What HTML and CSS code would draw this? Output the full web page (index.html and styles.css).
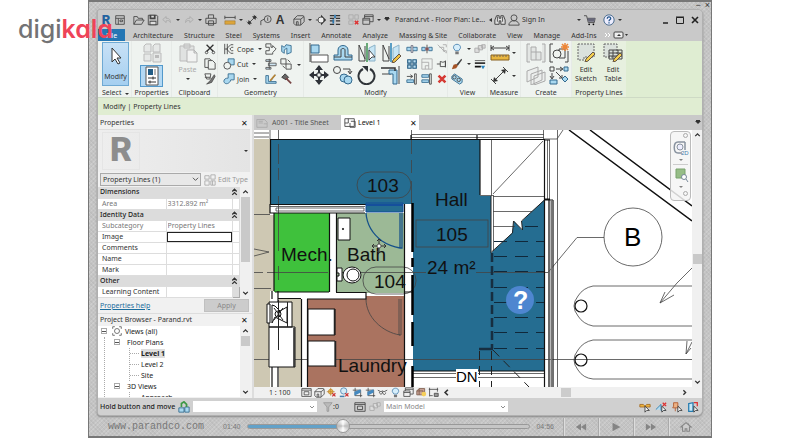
FILE: index.html
```html
<!DOCTYPE html>
<html lang="en">
<head>
<meta charset="utf-8">
<title>Parand.rvt - Floor Plan: Level 1</title>
<link rel="stylesheet" href="styles.css">
</head>
<body>
<svg class="sprite" aria-hidden="true">
  <defs>
    <symbol id="layout" viewBox="0 0 14 14"><path d="M2 2h10v10H2zM2 5h10M5 5v7M7 7h3v2H7z" class="k"/></symbol>
    <symbol id="open" viewBox="0 0 14 14"><path d="M1 12V3h4l1 2h5v2M1 12l3-5h9l-3 5z" class="k"/></symbol>
    <symbol id="save" viewBox="0 0 14 14"><path d="M1.500 1.500h10l1 1v10h-11z" class="k"/><path d="M3 1h7v5H3zM3 8h8v5H3z" fill="#444"/><path d="M5 2h3v2H5zM4 9h6v3H4z" fill="#ddd"/></symbol>
    <symbol id="undo" viewBox="0 0 14 14"><path d="M6 3L2 6.500 6 10V8c3-1 4 0 5 2 0-4-2-5-5-5z" class="g"/></symbol>
    <symbol id="redo" viewBox="0 0 14 14"><path d="M8 3l4 3.500L8 10V8c-3-1-4 0-5 2 0-4 2-5 5-5z" class="g"/></symbol>
    <symbol id="print" viewBox="0 0 14 14"><path d="M4 5V1h6v4M1 5h12v6H1zM4 8h6v5H4z" class="k"/></symbol>
    <symbol id="dim" viewBox="0 0 14 14"><path d="M1 4h12M1 2v4M13 2v4" class="k"/><path d="M1 8h12v4H1z" fill="#dda63b" stroke="#886020" stroke-width=".5"/></symbol>
    <symbol id="align" viewBox="0 0 14 14"><path d="M3 11l8-8M1 9l4 4M9 1l4 4" class="k"/><path d="M2 12l1-5 4 4zM12 2L7 3l4 4z" fill="#333"/></symbol>
    <symbol id="tag" viewBox="0 0 14 14"><circle cx="9" cy="6" r="4" class="k"/><path d="M9 4v4M1 13V8l4-2" class="k"/></symbol>
    <symbol id="cube" viewBox="0 0 14 14"><path d="M1 6l4-4h7l1 2v5l-4 4H3l-2-2zM1 6h8v7M9 6l4-3M4 13V9h2v4" class="k"/></symbol>
    <symbol id="section" viewBox="0 0 14 14"><path d="M7 1l6 6-6 6z" fill="#333"/><circle cx="7" cy="7" r="3.500" fill="#eee" stroke="#444"/><path d="M1 7h3" class="k"/></symbol>
    <symbol id="thin" viewBox="0 0 14 14"><path d="M1 2h5M1 5h5M1 8h5M1 12h5M8 2h5M8 5h5M8 8h5M8 12h5" stroke="#333" stroke-width="1.500"/><path d="M7 1v4M5 6v5" stroke="#2c77af" stroke-width="2"/></symbol>
    <symbol id="hidden" viewBox="0 0 14 14"><path d="M1 1h5v5H1zM8 1h4v5H8zM1 8h5v4H1z" class="g"/><path d="M8 8l4 4M12 8l-4 4" stroke="#d33" stroke-width="1.800"/></symbol>
    <symbol id="switch" viewBox="0 0 14 14"><path d="M3 5V1h10v8H9M1 5h8v7H1zM1 7h8M3 3h10" class="k"/></symbol>
    <symbol id="binoc" viewBox="0 0 14 14"><path d="M3 2h3v3h2V2h3l2 5v5H8V8H6v4H1V7z" fill="#ddd" stroke="#333"/><path d="M4 3v6M10 3v6" class="k"/></symbol>
    <symbol id="user" viewBox="0 0 14 14"><circle cx="7" cy="4.500" r="3.500" class="k"/><path d="M1 13c0-3 2-4 4-5h4c2 1 4 2 4 5z" class="k"/></symbol>
    <symbol id="cart" viewBox="0 0 14 14"><path d="M0 2h3l2 8h7l1-5H4" class="k"/><path d="M4 5h9l-1 4H5z" fill="#667"/><circle cx="6" cy="12" r="1"/><circle cx="11" cy="12" r="1"/></symbol>
    <symbol id="help" viewBox="0 0 14 14"><circle cx="7" cy="7" r="6" fill="#eef" stroke="#345b80"/><path d="M5 5.500c0-3 4-3 4 0 0 1-2 1-2 3M7 9.500v1.500" fill="none" stroke="#23578a" stroke-width="1.500"/></symbol>
    <symbol id="house" viewBox="0 0 14 14"><path d="M1 7l6-5 6 5H11v5H8V9H6v3H3V7zM10 3v2" fill="#ccc" stroke="#858585" stroke-width="1.200"/></symbol>

    <symbol id="arrow" viewBox="0 0 20 20"><path d="M6 2v14l3-3 3 5 2-1-3-5h4z" fill="#fff" stroke="#333"/></symbol>
    <symbol id="family" viewBox="0 0 20 20"><path d="M2 3l2-2h5v8H2zM11 3l2-2h5v8h-7zM2 11h7v7H2zM11 10h8v9h-8z" fill="#e6e8e7" stroke="#bbb"/><path d="M13 12h4v3h-4z" fill="#bbb"/></symbol>
    <symbol id="props" viewBox="0 0 20 20"><path d="M4 1h12v18H4z" fill="#fff" stroke="#555"/><path d="M6 3h5v6H6z" fill="#235d86"/><path d="M12 4h2M12 6h2M12 8h2" stroke="#777"/><path d="M6 12h8M6 16h8M11 10.500v3M8 14.500v3" stroke="#333"/></symbol>
    <symbol id="paste" viewBox="0 0 20 20"><path d="M2 3h14v15H2zM6 1h6v4H6z" fill="#e0e2e1" stroke="#bbb"/><path d="M9 7h7l3 3v9H9zM16 7v3h3" fill="#f2f3f2" stroke="#b5b5b5"/></symbol>
    <symbol id="scissor" viewBox="0 0 14 14"><path d="M3 2l8 8M11 2l-8 8" stroke="#333" stroke-width="1.500"/><circle cx="3" cy="11" r="1.500" class="k"/><circle cx="11" cy="11" r="1.500" class="k"/></symbol>
    <symbol id="copy" viewBox="0 0 14 14"><path d="M1 1h6l2 2v8H1z" class="k"/><path d="M5 3h5l3 3v7H5z" fill="#eff3f0" stroke="#444"/></symbol>
    <symbol id="brush" viewBox="0 0 14 14"><path d="M1 1h7l-1 6H3zM1 5h6" class="k"/><path d="M12 2L7 9l-4 4 6-2 4-7z" fill="#777" stroke="#333" stroke-width=".7"/></symbol>
    <symbol id="cope" viewBox="0 0 14 14"><path d="M2 1v12M5 1v12M2 7h3M12 2H9L5 6v2l4 4h3M12 5h-2L8 7l2 2h2" class="k"/></symbol>
    <symbol id="cut" viewBox="0 0 14 14"><path d="M6 1h7v7H6z" class="b"/><circle cx="5" cy="9" r="4" fill="#eff3f0" stroke="#444"/></symbol>
    <symbol id="join" viewBox="0 0 14 14"><path d="M6 1h7v7H9c-1 5-7 6-8 2 0-3 2-4 5-4z" class="b"/></symbol>
    <symbol id="geo1" viewBox="0 0 14 14"><path d="M1 1h6v4h2V3l4 4-4 4v2H1V9h4V5H1z" class="k"/></symbol>
    <symbol id="geo2" viewBox="0 0 14 14"><path d="M2 3l3 2 2-3 6 1v8l-5 2V6L5 8v4L2 10z" class="b"/></symbol>
    <symbol id="geo3" viewBox="0 0 14 14"><path d="M1 2h6v2H1zM4 6h9v3H4zM1 11h6v2H1zM5 1v12" class="b2"/></symbol>
    <symbol id="geo4" viewBox="0 0 14 14"><path d="M1 1h6v6H1zM7 7h6v6H7zM9 2l3 3M3 9l3 3" class="k"/></symbol>
    <symbol id="geo5" viewBox="0 0 14 14"><path d="M1 3v9h12v-2H4V3zM7 9l5-7" class="b"/><path d="M6 9l6-7" stroke="#b58436" stroke-width="2"/></symbol>
    <symbol id="hammer" viewBox="0 0 14 14"><path d="M2 5l4-4 4 4-3 3z" fill="#666" stroke="#333"/><path d="M7 6l6 6" stroke="#744" stroke-width="2"/></symbol>
    <symbol id="m1" viewBox="0 0 20 20"><path d="M2 2h8v8H2z" class="b"/><path d="M1 0v19M2 12h17v7H2z" fill="#fff" stroke="#555"/></symbol>
    <symbol id="m2" viewBox="0 0 20 20"><path d="M1 17h18v-5h-4V7c0-6-10-6-10 0v5H1z" class="b"/><path d="M1 14h7V7c0-2 4-2 4 0v7h7" class="k"/></symbol>
    <symbol id="m3" viewBox="0 0 20 20"><path d="M8 16L2 2v16h6V3" class="k"/><path d="M12 5l6-3v16h-6z" class="b3"/><path d="M10 0v19" stroke="#3b9150" stroke-width="1.500"/><path d="M12 7v10l3-3h3z" fill="#fff" stroke="#444"/></symbol>
    <symbol id="m4" viewBox="0 0 20 20"><path d="M8 16L2 2v16h6V3" class="k"/><path d="M12 5l6-3v11l-6 3z" class="b3"/><path d="M10 0v19" stroke="#2883b7" stroke-width="1.500"/><path d="M12 17l6-6 2 2-6 6-3 1z" fill="#f0c344" stroke="#654"/></symbol>
    <symbol id="move" viewBox="0 0 20 20"><path d="M10 0l4 5h-3v4h4V6l5 4-5 4v-3h-4v4h3l-4 5-4-5h3v-4H5v3l-5-4 5-4v3h4V5H6z" fill="#2e3238"/><path d="M8 8h4v4H8z" fill="#eff3f0" stroke="#2e3238"/></symbol>
    <symbol id="m5" viewBox="0 0 20 20"><circle cx="4" cy="5" r="3.500" class="k"/><path d="M10 4h7v4M15 6l2 3 2-3" class="k"/><circle cx="11" cy="13" r="4" class="b"/><circle cx="15" cy="15" r="4" class="b"/></symbol>
    <symbol id="rotate" viewBox="0 0 20 20"><path d="M13 4a8 8 0 1 1-7 0" fill="none" stroke="#30353a" stroke-width="2"/><path d="M5 1h6v6z" fill="#30353a"/></symbol>
    <symbol id="m6" viewBox="0 0 20 20"><path d="M14 19V8M18 19V1M1 9h9" class="k"/><path d="M8 5h8v14h-4V9H8z" class="b"/><path d="M0 3h14v3" fill="none" stroke="#333" stroke-width="1.500"/></symbol>
    <symbol id="s1" viewBox="0 0 14 14"><path d="M1 5h12v4H1z" class="b"/><path d="M6 3h2v8H6z" fill="#fff" stroke="#667"/></symbol>
    <symbol id="s2" viewBox="0 0 14 14"><path d="M1 5h4v4H1zM9 5h4v4H9z" class="b"/><circle cx="7" cy="7" r="2" fill="#b66"/><path d="M7 2v10" class="k"/></symbol>
    <symbol id="pin" viewBox="0 0 14 14"><path d="M1 7h4M5 4v6h6V4l-3 1zM11 3v8" class="k"/></symbol>
    <symbol id="unpin" viewBox="0 0 14 14"><path d="M2 2l9 9M4 5h5v5M8 2h4v3M8 9h4v3" class="g"/></symbol>
    <symbol id="array" viewBox="0 0 14 14"><path d="M2 2h4v4H2zM8 2h4v4H8zM2 8h4v4H2zM8 8h4v4H8z" fill="#bbdff2" stroke="#225b82" stroke-width="1.300"/></symbol>
    <symbol id="scale" viewBox="0 0 14 14"><path d="M1 1h12v12H1zM1 5h8v8M5 9h4M5 9v4" class="g"/></symbol>
    <symbol id="trim" viewBox="0 0 14 14"><path d="M1 8h8v3H1z" class="b"/><path d="M10 1h2v12h-2zM1 4h6M5 2l3 2-3 2" class="k"/></symbol>
    <symbol id="trim2" viewBox="0 0 14 14"><path d="M1 2h8v3H1zM1 8h8v3H1z" class="b"/><path d="M10 1h2v12h-2z" class="k"/></symbol>
    <symbol id="del" viewBox="0 0 14 14"><path d="M3 3l8 8M11 3l-8 8" stroke="#d53b35" stroke-width="3"/></symbol>
    <symbol id="bulb" viewBox="0 0 14 14"><path d="M5 9L3 6c-1-6 9-6 8 0L9 9z" fill="#d6eefb" stroke="#4680ae"/><path d="M5 10h4v3H5z" fill="#777"/></symbol>
    <symbol id="paint" viewBox="0 0 14 14"><path d="M6 8L12 1l1 1-5 7z" fill="#444"/><path d="M1 13l2-5 3-1 2 2-2 3z" fill="#a55325"/></symbol>
    <symbol id="boxes" viewBox="0 0 14 14"><path d="M1 6h5v5H1zM5 3h5v5H5zM9 2h4v4H9z" fill="#ddd" stroke="#aaa"/></symbol>
    <symbol id="lines" viewBox="0 0 14 14"><path d="M1 3h12" stroke="#555"/><path d="M1 6h12" stroke="#333" stroke-width="2"/><path d="M1 10h7" stroke="#111" stroke-width="2"/><path d="M8 9h5l-2.500 4z" fill="#2a82bc"/></symbol>
    <symbol id="pipe" viewBox="0 0 14 14"><path d="M1 4l3-3 9 6v4l-3 2-9-6z" class="b"/><circle cx="4" cy="5" r="2" class="k"/><circle cx="9" cy="8" r="2" class="k"/></symbol>
    <symbol id="ruler" viewBox="0 0 20 20"><path d="M1 5h18M1 2v6M19 2v6M4 3L1 5l3 2M16 3l3 2-3 2" class="k"/><path d="M1 12h18v5H1z" fill="#e8b63f" stroke="#87611f"/><path d="M4 12v2M7 12v2M10 12v2M13 12v2M16 12v2" stroke="#765"/></symbol>
    <symbol id="measure" viewBox="0 0 20 20"><path d="M3 16L16 3M1 13l5 5M13 1l5 5" class="k"/><path d="M3 16l1-5 4 4zM16 3l-5 1 4 4z" fill="#333"/></symbol>
    <symbol id="asm" viewBox="0 0 20 20"><path d="M4 1H1v18h3M16 1h3v18h-3M5 4h5v5h5v8H5zM5 9h5v8" fill="#e3e6e4" stroke="#aaa"/></symbol>
    <symbol id="newfam" viewBox="0 0 20 20"><path d="M4 1H1v18h3M16 19h3V8M10 6h6v9h-6z" class="k"/><circle cx="8" cy="11" r="4" fill="#eff3f0" stroke="#444"/><path d="M16 0v8M12 4h8M13 1l6 6M19 1l-6 6" stroke="#ec8638" stroke-width="1.500"/></symbol>
    <symbol id="group" viewBox="0 0 20 20"><path d="M1 6l11-4v10L1 17zM5 9l11-4v10L5 20zM8 11l11-4v9L8 20z" fill="#eceeed" stroke="#aaa"/></symbol>
    <symbol id="create" viewBox="0 0 20 20"><path d="M1 2h4v4H1zM7 4h6M11 2l3 2-3 2M3 8v5M1 11l2 3 2-3M7 7l6 6M10 13h3v-3" class="k"/><path d="M15 2h4v4h-4zM1 15h7v4H1zM16 11l3 3-3 3-3-3z" class="b"/></symbol>
    <symbol id="sketch" viewBox="0 0 20 20"><path d="M2 2h16v13H8v3H2z" fill="#dbe2dc" stroke="#666" stroke-dasharray="2 1"/><path d="M10 17l7-7 2 2-7 7-3 1z" fill="#f3cf4e" stroke="#654"/></symbol>
    <symbol id="table" viewBox="0 0 20 20"><path d="M1 2h13v13H1z" fill="#dbe2dc" stroke="#666" stroke-dasharray="2 1"/><path d="M6 8h13v9H6zM6 11h13M6 14h13M10 8v9M15 8v9" class="k"/><path d="M11 17l6-6 2 2-6 6-3 1z" fill="#f3cf4e" stroke="#654"/></symbol>
    <symbol id="detail" viewBox="0 0 14 14"><path d="M1 2h12v10H1zM1 4h12M4 6h6v4H4z" class="k"/></symbol>
    <symbol id="sun" viewBox="0 0 14 14"><circle cx="6" cy="6" r="3" fill="#f7c854" stroke="#bd8430"/><path d="M6 1v10M1 6h10" stroke="#bd8430"/><path d="M8 8l4 4M12 8l-4 4" stroke="#c33" stroke-width="1.500"/></symbol>
    <symbol id="shadow" viewBox="0 0 14 14"><circle cx="6" cy="5" r="4" fill="#d4eaf6" stroke="#4680ae"/><path d="M1 12h6" stroke="#4680ae" stroke-width="2"/><path d="M8 8l4 4M12 8l-4 4" stroke="#c33" stroke-width="1.500"/></symbol>
    <symbol id="crop" viewBox="0 0 14 14"><path d="M4 1v10h9M1 4h10v9" class="k"/><path d="M3 6l8-3v4L3 11z" fill="#4489c0"/></symbol>
    <symbol id="specs" viewBox="0 0 14 14"><path d="M1 4l4 2 2-1 2 1 4-2M3 6c0 4 4 4 4 0 0 4 4 5 4 1" class="k"/></symbol>
    <symbol id="filter" viewBox="0 0 14 14"><path d="M3 2h10L9 7v5H7V7z" fill="#bbb" stroke="#999"/></symbol>
    <symbol id="work" viewBox="0 0 14 14"><path d="M1 8h6v5H1zM8 7h5v6H8z" class="b"/><path d="M4 7V3l3-2 3 3v3" fill="none" stroke="#3c9845" stroke-width="2"/></symbol>
    <symbol id="sel" viewBox="0 0 14 14"><path d="M1 4h4l2 2 2-2h4v3H1z" fill="#edb53d" stroke="#a46b24"/><path d="M7 6v7l2-2h3z" fill="#fff" stroke="#333"/></symbol>
    <symbol id="sel2" viewBox="0 0 14 14"><path d="M1 10l6-6v7h5" fill="#b6dbee" stroke="#277caf"/><path d="M9 2l4 4M13 2L9 6" stroke="#d33" stroke-width="1.500"/><path d="M8 6v7l2-2h3z" fill="#fff" stroke="#333"/></symbol>
    <symbol id="sel3" viewBox="0 0 14 14"><path d="M3 2h5v4l2 2H2l1-2zM5 8v4" fill="#edb183" stroke="#b15a2c"/><path d="M8 6v7l2-2h3z" fill="#fff" stroke="#333"/></symbol>
    <symbol id="sel4" viewBox="0 0 14 14"><path d="M2 3l5-1v10H2z" fill="#c8e8f7" stroke="#277caf" stroke-width="1.500"/><path d="M8 2h4v4" fill="none" stroke="#d33" stroke-width="1.500"/><path d="M8 6v7l2-2h3z" fill="#fff" stroke="#333"/></symbol>
    <symbol id="reveal" viewBox="0 0 14 14"><path d="M1 5l3-3h7v8H1zM4 2v8M1 5h8v5" fill="#c9a397" stroke="#754"/><circle cx="10" cy="9" r="3" fill="#f6cf5a"/></symbol>
    <symbol id="constraint" viewBox="0 0 14 14"><path d="M1 3h12M2 1v11M12 1v5M2 11h4" class="k"/><path d="M8 8h5v4H8z" fill="#999" stroke="#444"/></symbol>
    <symbol id="sheet" viewBox="0 0 14 14"><path d="M1 3h9l3 3v6H1zM3 5h5M3 7h5M9 8h4" class="g"/></symbol>
    <symbol id="plan" viewBox="0 0 14 14"><path d="M1 2h11v9H1zM1 7h4V2M8 5h5v7H7V7" class="k"/></symbol>
    <symbol id="edittype" viewBox="0 0 14 14"><path d="M1 2h5v4H1zM8 1h5v5H8zM1 8h5v5H1zM8 8h5v5H8zM10 8v5" class="g"/></symbol>
    <symbol id="viewicon" viewBox="0 0 14 14"><path d="M1 4V1h3M10 1h3v3M1 10v3h3M10 13h3v-3" class="k"/><circle cx="7" cy="7" r="3.500" class="k"/></symbol>
    <symbol id="fold" viewBox="0 0 8 8"><path d="M2 4l2-2 2 2M2 7l2-2 2 2" class="k2"/></symbol>
  </defs>
</svg>

<div class="logo"><span>digi</span><b>kala</b></div>

<div class="player">
  <div class="frame-top"><button aria-label="Minimize player">−</button><button aria-label="Close player">×</button></div>

  <div class="app">
    <header class="titlebar">
      <div class="quick">
        <button class="r">R</button><button><svg><use href="#layout"/></svg></button><i class="sep"></i>
        <button><svg><use href="#open"/></svg></button><button><svg><use href="#save"/></svg></button><button><svg><use href="#undo"/></svg></button><button class="caret"></button><button><svg><use href="#redo"/></svg></button><button class="caret"></button><button><svg><use href="#print"/></svg></button><i class="sep"></i>
        <button><svg><use href="#dim"/></svg></button><button class="caret"></button><button><svg><use href="#align"/></svg></button><button><svg><use href="#tag"/></svg></button><button class="letter">A</button><i class="sep"></i>
        <button><svg><use href="#cube"/></svg></button><button class="caret"></button><button><svg><use href="#section"/></svg></button><button><svg><use href="#thin"/></svg></button><i class="sep"></i>
        <button><svg><use href="#hidden"/></svg></button><button><svg><use href="#switch"/></svg></button><button class="caret"></button><button class="caret more"></button>
      </div>
      <span class="title">Parand.rvt - Floor Plan: Le...</span>
      <div class="account"><button class="back"></button><button><svg><use href="#binoc"/></svg></button><button class="signin"><svg><use href="#user"/></svg>Sign In</button></div>
      <div class="account"><button class="caret"></button><button><svg><use href="#cart"/></svg></button><i class="sep"></i><button><svg><use href="#help"/></svg></button><button class="caret"></button></div>
      <div class="winctl"><button aria-label="Minimize"><svg viewBox="0 0 10 10"><path d="M3 8h5" stroke="#222" stroke-width="1.500"/></svg></button><button aria-label="Maximize"><svg viewBox="0 0 10 10"><path d="M1.500 2.500h7v6h-7zM1 2h8" fill="none" stroke="#222"/></svg></button><button aria-label="Close"><svg viewBox="0 0 10 10"><path d="M2 2l6 6M8 2L2 8" stroke="#222" stroke-width="1.600"/></svg></button></div>
    </header>

    <nav class="tabs">
      <button class="file">File</button><button>Architecture</button><button>Structure</button><button>Steel</button><button>Systems</button><button>Insert</button><button>Annotate</button><button>Analyze</button><button>Massing &amp; Site</button><button>Collaborate</button><button>View</button><button>Manage</button><button>Add-Ins</button>
      <button class="expand" aria-label="Ribbon display"><svg viewBox="0 0 24 8"><path d="M1 2l2 2-2 2M4 2l2 2-2 2" fill="none" stroke="#fff"/><rect x="10" y="1" width="9" height="6" rx="1" fill="#eee" stroke="#444"/><path d="M13 5l2-2 2 2z" fill="#333"/><path d="M21 3h3l-1.500 2z" fill="#333"/></svg></button>
    </nav>

    <section class="ribbon">
      <div class="panel p-select"><div class="body"><button class="modify"><svg class="big"><use href="#arrow"/></svg>Modify</button></div><h2>Select <span class="caret"></span></h2></div>
      <div class="panel p-props"><div class="body stack"><button><svg class="big"><use href="#family"/></svg></button><button class="on"><svg class="big"><use href="#props"/></svg></button></div><h2>Properties</h2></div>
      <div class="panel p-clip"><div class="body"><button class="paste"><svg class="big"><use href="#paste"/></svg>Paste<span class="caret"></span></button><div class="col"><button><svg><use href="#scissor"/></svg></button><button><svg><use href="#copy"/></svg></button><button><svg><use href="#brush"/></svg></button></div></div><h2>Clipboard</h2></div>
      <div class="panel p-geo"><div class="body"><div class="col named"><button><svg><use href="#cope"/></svg>Cope<span class="caret"></span></button><button><svg><use href="#cut"/></svg>Cut<span class="caret"></span></button><button><svg><use href="#join"/></svg>Join<span class="caret"></span></button></div><div class="col"><button><svg><use href="#geo1"/></svg></button><button><svg><use href="#geo3"/></svg></button><button><svg><use href="#geo5"/></svg></button></div><div class="col"><button><svg><use href="#geo2"/></svg></button><button><svg><use href="#geo4"/></svg></button><button><svg><use href="#hammer"/></svg></button></div><span class="caret"></span></div><h2>Geometry</h2></div>
      <div class="panel p-mod"><div class="body"><div class="bigs"><button><svg class="big"><use href="#m1"/></svg></button><button><svg class="big"><use href="#m2"/></svg></button><button><svg class="big"><use href="#m3"/></svg></button><button><svg class="big"><use href="#m4"/></svg></button><button><svg class="big"><use href="#move"/></svg></button><button><svg class="big"><use href="#m5"/></svg></button><button><svg class="big"><use href="#rotate"/></svg></button><button><svg class="big"><use href="#m6"/></svg></button></div>
        <div class="col"><button><svg><use href="#s1"/></svg></button><button><svg><use href="#array"/></svg></button><button><svg><use href="#trim"/></svg></button></div><div class="col"><button><svg><use href="#s2"/></svg></button><button><svg><use href="#scale"/></svg></button><button><svg><use href="#trim2"/></svg></button></div><div class="col"><button><svg><use href="#unpin"/></svg></button><button><svg><use href="#pin"/></svg></button><button><svg><use href="#del"/></svg></button></div></div><h2>Modify</h2></div>
      <div class="panel p-view"><div class="body"><div class="col named"><button><svg><use href="#bulb"/></svg><span class="caret"></span></button><button><svg><use href="#paint"/></svg><span class="caret"></span></button><button><svg><use href="#pipe"/></svg></button></div><div class="col"><button><svg><use href="#boxes"/></svg></button><button><svg><use href="#lines"/></svg></button></div></div><h2>View</h2></div>
      <div class="panel p-meas"><div class="body stack"><button><svg class="big"><use href="#ruler"/></svg><span class="caret"></span></button><button><svg class="big"><use href="#measure"/></svg><span class="caret"></span></button></div><h2>Measure</h2></div>
      <div class="panel p-create"><div class="body"><div class="bigs two"><button><svg class="big"><use href="#asm"/></svg></button><button><svg class="big"><use href="#newfam"/></svg></button><button><svg class="big"><use href="#group"/></svg></button><button><svg class="big"><use href="#create"/></svg></button></div></div><h2>Create</h2></div>
      <div class="panel p-lines"><div class="body"><button><svg class="big"><use href="#sketch"/></svg>Edit<br>Sketch</button><button><svg class="big"><use href="#table"/></svg>Edit<br>Table</button></div><h2>Property Lines</h2></div>
    </section>
    <div class="context">Modify | Property Lines</div>

    <main class="work">
      <aside class="side">
        <section class="palette">
          <h3>Properties <button class="x" aria-label="Close properties">✕</button></h3>
          <div class="preview"><span>R</span><button class="caret"></button></div>
          <div class="typerow"><select aria-label="Type"><option>Property Lines (1)</option></select><svg class="chev" viewBox="0 0 8 8"><path d="M1 2l3 3 3-3" class="k"/></svg><button disabled><svg><use href="#edittype"/></svg>Edit Type</button></div>
          <div class="scrolled">
            <table>
              <colgroup><col class="c-name"><col><col class="c-pick"></colgroup>
              <tr class="head"><th colspan="3">Dimensions<svg><use href="#fold"/></svg></th></tr>
              <tr class="dim"><td><label for="area">Area</label></td><td><input id="area" value="3312.892 m²" readonly></td><td></td></tr>
              <tr class="head"><th colspan="3">Identity Data<svg><use href="#fold"/></svg></th></tr>
              <tr class="dim"><td><label for="sub">Subcategory</label></td><td><input id="sub" value="Property Lines" readonly></td><td></td></tr>
              <tr><td><label for="img">Image</label></td><td><input id="img" class="focus"></td><td></td></tr>
              <tr><td><label for="com">Comments</label></td><td><input id="com"></td><td></td></tr>
              <tr><td><label for="nam">Name</label></td><td><input id="nam"></td><td></td></tr>
              <tr><td><label for="mar">Mark</label></td><td><input id="mar"></td><td></td></tr>
              <tr class="head"><th colspan="3">Other<svg><use href="#fold"/></svg></th></tr>
              <tr><td><label for="lea">Learning Content</label></td><td><input id="lea"></td><td class="pick"></td></tr>
            </table>
            <div class="vbar"><svg viewBox="0 0 8 8"><path d="M2 5l2-2 2 2" class="k2"/></svg><i class="thumb-long"></i><svg viewBox="0 0 8 8"><path d="M2 3l2 2 2-2" class="k2"/></svg></div>
          </div>
          <div class="helprow"><a href="#help">Properties help</a><button disabled>Apply</button></div>
        </section>
        <section class="palette browser">
          <h3>Project Browser - Parand.rvt <button class="x" aria-label="Close browser">✕</button></h3>
          <div class="scrolled">
            <ul class="tree">
              <li><span class="box"></span><svg><use href="#viewicon"/></svg>Views (all)
                <ul>
                  <li><span class="box"></span>Floor Plans
                    <ul class="leaf"><li><b>Level 1</b></li><li>Level 2</li><li>Site</li></ul></li>
                  <li><span class="box"></span>3D Views
                    <ul class="leaf"><li>Approach</li></ul></li>
                </ul></li>
            </ul>
            <div class="vbar"><svg viewBox="0 0 8 8"><path d="M2 5l2-2 2 2" class="k2"/></svg><i class="thumb-short"></i><svg viewBox="0 0 8 8"><path d="M2 3l2 2 2-2" class="k2"/></svg></div>
          </div>
        </section>
      </aside>

      <section class="views">
        <div class="doctabs"><button><svg><use href="#sheet"/></svg>A001 - Title Sheet</button><button class="active"><svg><use href="#plan"/></svg>Level 1<span>✕</span></button><span class="caret more"></span></div>
        <div class="canvas">
          <svg class="plan" viewBox="254 130 438 257" role="img" aria-label="Floor plan">
            <path d="M254 139h16v76h4v76h-4v96h-16z" fill="#cec8b3"/>
            <path d="M279 299h22v88h-22z" fill="#cec8b3"/>
            <path d="M270 139h210v57h11v57l21-20 2-12 8 9v-9l22-21v171H413V204H270z" fill="#256d91"/>
            <path d="M274 213h55v79h-55z" fill="#3fc13c"/>
            <path d="M336 213h68v80h-68z" fill="#9cb996"/>
            <path d="M307 299h59v-3h38v91h-97z" fill="#aa7360"/>
            <path d="M270 204h96v9h-96zM329 212h7v81h-7zM271 292h95v7h-95zM301 298h6v89h-6zM404 204h8v183h-8z" fill="#fff"/>
            <g class="thin">
              <path d="M254 133h15M254 137h15M270 130v9M254 214.500h16M254 249l15 3-15 4M254 272.500h9M267 272.500h61M338 272.500h88M476 272.500h72l29-35h27M254 288.500h17M254 359.500h438"/>
              <path d="M278.500 130v9M278.500 144v20M278.500 168v12M278.500 196v55M278.500 266v14M411.500 130v24M411.500 160v13M411.500 181v22"/>
              <path d="M411 134.500h133M411 137.500h133M543.500 130v9M491.500 139v57M480 195.500h13M493.500 195v56M493 194l50-53M493 196.500h51M493 211.500h39M493 226.500h22"/>
              <path d="M547.500 140v59M549.500 140v59M557.500 130v257M548.500 200v187M549.500 200v187M544 139h13l6-9"/>
              <path d="M413 373.500h131M413 377.500h131M270 206.500h95M276 208h88v3h-88z"/>
              <rect x="357" y="172" width="54" height="26" rx="13"/><rect x="416" y="220" width="72" height="27"/><rect x="363" y="267" width="53" height="27" rx="13"/>
              <circle cx="633" cy="237" r="29"/>
              <path d="M692 286H593q-10 2-15 10-8 10 0 20 5 8 15 10h99M692 340H593q-10 2-15 10-8 10 0 20 5 8 15 9h99"/>
              <path d="M692 268l-15 15-17 20 14-8M660 303l5-11M692 342l-6 12 1-13M686 354l5-6"/>
              <path d="M366 299c0 18 16 33 34 36M399 299v36h2v-36"/>
            </g>
            <g class="bold">
              <path d="M270 139.500h274M270.500 139v65M270 204.500h96M270 213h95M270 204v9h4v78M329.500 213v79M336.500 213v79M275 292h54M336 292.500h30M278 298.500h23M307 299h59v-7M301.500 299v88M307.500 299v88M404.500 204v183"/>
              <path d="M480 139v56M544.500 139v248M413 371h131M553 200v187M544 200h9M545 140h5M545 199h5M411 135v4M477 135v4"/>
              <path d="M569 130l123 91M590 130l102 76" stroke-width="1.500"/>
              <circle cx="581" cy="306" r="6"/><circle cx="581" cy="360" r="6"/>
              <path d="M404 292h9M272 291v8M278 291v11M272 367v20M278 367v20"/>
              <path d="M551.500 200v187" stroke="#777" stroke-width="2"/>
            </g>
            <path d="M412.500 203v49M412.500 258v9M412.500 275v40M412.500 322v24M412.500 366v21" stroke="#000" stroke-width="2.500"/>
            <g fill="#fff" stroke="#111"><path d="M308 309h27v26h-27zM308 341h27v25h-27zM269 327h26v40h-26zM269 302h23v25h-23zM338 218h12v22h-12z"/><path d="M267 304h3v19h-3zM272 305v18l3-6 6 3 6 3v-16l-7 4-5-5z"/><circle cx="278" cy="314" r="3"/><circle cx="343" cy="229" r=".7"/><path d="M337 268h5v13h-5v-5h2v-3h-2z"/><ellipse cx="352" cy="275" rx="9" ry="8"/><ellipse cx="353" cy="275" rx="6" ry="6"/></g>
            <path d="M334.500 309v26M335.500 341v26M294 328v39" stroke="#222" stroke-width="1.500"/>
            <path d="M278.500 300v50M287.500 302v25M274 308l9 12M283 308l-9 12" class="t"/>
            <g fill="none" stroke="#10283a" stroke-dasharray="13 8"><path d="M494 241.500h50M494 256.500h50M494 271.500h50M494 287.500h50M494 302.500h50M494 317.500h50M494 332.500h50M494 348.500h50M525 226.500h19"/></g>
            <path d="M492 253v96" stroke="#172e40" stroke-width="2.500" stroke-dasharray="9 4"/>
            <path d="M479 349h14" stroke="#172e40" stroke-width="2.500"/>
            <path d="M479.500 351v36M491.500 351v36M493 350l36 37" fill="none" stroke="#222" stroke-dasharray="9 6"/>
            <path d="M491.500 252l21-19 1-12 9 9-1-9 23-21M491 196v57" class="t"/>
            <path d="M366 203h37v9h-37z" fill="#256d91" stroke="#124c98"/><path d="M366 204h37v2h-37z" fill="#154f9c"/>
            <path d="M366 213c1 14 8 22 16 28 6 4 12 6 18 7M400 213v35h2v-35" fill="none" stroke="#17528a" stroke-width="1.300"/>
            <path d="M456 369h22v14h-22z" fill="#fff"/>
            <g class="label"><text x="367" y="192">103</text><text x="374" y="288">104</text><text x="435" y="206">Hall</text><text x="436" y="241">105</text><text x="427" y="274">24 m²</text><text x="281" y="261">Mech.</text><text x="347" y="261">Bath</text><text x="338" y="372">Laundry</text></g>
            <text x="456" y="382" class="dn">DN</text><text x="624" y="246" class="grid">B</text>
            <path d="M379 239v14M372 246h14M377 241l2-2 2 2M377 251l2 2 2-2M374 244l-2 2 2 2M384 244l2 2-2 2" fill="none" stroke="#333"/><circle cx="379" cy="246" r="2" fill="#fff" stroke="#333" stroke-width=".7"/>
            <circle cx="520" cy="300" r="14" fill="#4e86d0"/><text x="513" y="309" class="q">?</text>
          </svg>
          <div class="navbar"><i></i><button aria-label="Navigation wheel"><svg viewBox="0 0 16 16"><path d="M12 2H5C0 2 0 13 5 13h4M12 2v8" fill="none" stroke="#8993a0" stroke-width="1.500"/><circle cx="7" cy="7" r="3" fill="#eef" stroke="#8993a0"/><text x="8" y="15">2D</text></svg></button><span class="caret"></span><hr><button aria-label="Zoom region"><svg viewBox="0 0 16 16"><path d="M3 2h9v9H3z" fill="#96bd87" stroke="#78a36c"/><circle cx="11" cy="10" r="2.500" fill="#fff" stroke="#789"/><path d="M13 12l2 3" stroke="#789"/></svg></button><span class="caret"></span><i></i></div>
        </div>
        <div class="vbar tall"><svg viewBox="0 0 8 8"><path d="M2 5l2-2 2 2" class="k2"/></svg><i class="thumb"></i><svg viewBox="0 0 8 8"><path d="M2 3l2 2 2-2" class="k2"/></svg></div>
        <div class="viewbar"><span>1 : 100</span><div class="vicons"><button><svg><use href="#detail"/></svg></button><button><svg><use href="#cube"/></svg></button><button><svg><use href="#sun"/></svg></button><button><svg><use href="#shadow"/></svg></button><button><svg><use href="#crop"/></svg></button><button><svg><use href="#crop"/></svg></button><button><svg><use href="#specs"/></svg></button><button><svg><use href="#bulb"/></svg></button><button><svg><use href="#switch"/></svg></button><button><svg><use href="#reveal"/></svg></button><button><svg><use href="#constraint"/></svg></button><button><svg viewBox="0 0 8 8"><path d="M5 2L3 4l2 2" class="k2"/></svg></button></div><i class="hthumb"></i><svg viewBox="0 0 8 8"><path d="M3 2l2 2-2 2" class="k2"/></svg></div>
      </section>
    </main>

    <footer class="status"><strong>Hold button and move</strong><svg><use href="#work"/></svg><div class="pick"><select aria-label="Workset"><option></option></select><svg viewBox="0 0 8 8"><path d="M2 3l2 2 2-2" class="k"/></svg></div><div class="counts"><svg><use href="#filter"/></svg><span>:0</span></div><svg><use href="#detail"/></svg><svg><use href="#boxes"/></svg><div class="pick"><select aria-label="Design option"><option>Main Model</option></select><svg viewBox="0 0 8 8"><path d="M2 3l2 2 2-2" class="k"/></svg></div><div class="seltools"><button><svg><use href="#sel"/></svg></button><button><svg><use href="#sel2"/></svg></button><button><svg><use href="#sel3"/></svg></button><button><svg><use href="#sel4"/></svg></button></div></footer>
  </div>

  <div class="controls"><span class="site">www.parandco.com</span><time>01:40</time><input type="range" min="0" max="100" value="33" aria-label="Seek"><time>04:56</time>
    <div class="transport"><button aria-label="Rewind"><svg viewBox="0 0 14 14"><path d="M7 3v8L1 7zM13 3v8L7 7z" fill="#858585"/></svg></button><button aria-label="Play"><svg viewBox="0 0 14 14"><path d="M3 2l9 5-9 5z" fill="#858585"/></svg></button><button aria-label="Forward"><svg viewBox="0 0 14 14"><path d="M1 3v8l6-4zM7 3v8l6-4z" fill="#858585"/></svg></button><button aria-label="Home"><svg><use href="#house"/></svg></button></div>
  </div>
</div>
</body>
</html>
```
FILE: styles.css
```css
* { box-sizing: border-box; }
body { margin: 0; padding: 0 88px; background: #fff; color: #333; font: 7px/11px "Noto Sans", "Open Sans", sans-serif; }
button, select, input { margin: 0; padding: 0; border: 0; border-radius: 0; background: none; color: inherit; font: inherit; }
h2, h3 { margin: 0; font: inherit; }
button { display: flex; align-items: center; justify-content: center; white-space: nowrap; }
svg { flex: none; width: 12px; height: 12px; }
.sprite { position: absolute; width: 0; height: 0; }
.k { fill: none; stroke: #444; }
.k2 { fill: none; stroke: #333; stroke-width: 1.200; }
.g { fill: none; stroke: #aaa; }
.b { fill: #a9d8f0; stroke: #33698e; }
.b2 { fill: #cde5f2; stroke: #555; }
.b3 { fill: #c7e6f5; stroke: #8ab2c8; }

.logo { position: absolute; z-index: 2; left: 18px; top: 13px; font: 500 25px/32px Inter, Roboto, sans-serif; font-feature-settings: "cv11" 1; color: #737375; }
.logo b { font-weight: 600; color: #ee4358; }

.player { min-height: 438px; padding: 0 8px; border: 1px solid #777; border-width: 2px 1px; background: repeating-linear-gradient(45deg, #0000000a 0 1px, #0000 1px 3px), repeating-linear-gradient(-45deg, #ffffff26 0 1px, #0000 1px 3px), #c4c4c4; }
.frame-top { display: flex; justify-content: flex-end; gap: 4px; height: 7px; margin-right: -7px; font: 9px/7px "Liberation Sans", sans-serif; }
.app { overflow: hidden; border: 1px solid #b0b0b0; border-radius: 3px 5px 6px 4px; background: #c9c9c9; box-shadow: 0 1px 2px #888; }

.caret { flex: none; width: 8px; height: 8px; display: inline-flex; align-items: center; justify-content: center; }
.caret::after { content: ""; border: 2px solid transparent; border-top-color: #333; border-bottom: 0; }
.caret.more::after { border-width: 3px 3px 0; box-shadow: 0 -2px 0 -1px #333; }
.titlebar { display: flex; align-items: center; height: 19px; padding: 0 2px 0 1px; background: #c9c9c9; }
.quick, .account, .winctl { display: flex; align-items: center; }
.quick > button, .account > button { width: 14px; height: 14px; }
.quick > .caret, .account > .caret { width: 8px; }
.sep { width: 5px; height: 10px; }
.r { color: #2363a0; font: 900 13px/14px Roboto, sans-serif; }
.letter { font: 700 12px/14px "Liberation Sans", sans-serif; }
.title { margin-left: 4px; width: 92px; white-space: nowrap; }
.account .back { width: 6px; }
.back::after { content: ""; border: 2px solid transparent; border-right: 3px solid #333; border-left: 0; }
.account .signin { width: auto; gap: 2px; padding-left: 1px; }
.account + .account { margin-left: auto; }
.winctl { gap: 5px; margin-left: 36px; }
.winctl svg { width: 10px; height: 10px; }

.tabs { display: flex; align-items: center; gap: 11px; height: 12px; white-space: nowrap; background: #c9c9c9; }
.tabs button { height: 12px; }
.tabs .file { width: 27px; margin-right: -3px; color: #fff; background: #2476b4; }
.expand { margin-left: -4px; }
.expand svg { width: 24px; height: 8px; }

.ribbon { display: flex; height: 57px; background: #dfedd2; border-bottom: 1px solid #cedac5; }
.panel { display: flex; flex-direction: column; flex: none; background: #eff3f0; border-right: 1px solid #e6eae7; }
.body { display: flex; flex: none; align-items: flex-start; height: 46px; padding-top: 1px; }
.panel h2 { text-align: center; white-space: nowrap; }
.big { width: 20px; height: 20px; }
.p-select { width: 34px; padding-left: 4px; }
.panel.p-select h2 { text-align: left; }
.modify { flex-direction: column; gap: 5px; width: 27px; height: 44px; border: 1px solid #6fa9d3; background: linear-gradient(#c8e1f6, #a5cff0); }
.p-props { width: 40px; }
.stack { flex-direction: column; align-items: center; gap: 1px; }
.stack button { height: 22px; }
.stack .on { width: 23px; border: 1px solid #5399cb; background: #b4d9f4; }
.p-clip { width: 46px; }
.p-clip .body { padding-left: 5px; gap: 6px; }
.paste { flex-direction: column; width: 21px; color: #aaa; }
.paste .big { height: 22px; }
.col { display: grid; grid-template-rows: repeat(3, 14px); gap: 1px; }
.col button { min-width: 12px; height: 14px; justify-content: flex-start; }
.p-geo { width: 86px; }
.p-geo .body { padding-left: 5px; gap: 3px; }
.p-geo .named { width: 41px; }
.named button { gap: 2px; }
.p-geo .body > .caret { align-self: center; }
.p-mod { width: 144px; }
.p-mod .body { padding-left: 3px; gap: 3px; }
.bigs { display: grid; grid-template-columns: repeat(4, 24px); grid-auto-rows: 22px; }
.bigs.two { grid-template-columns: 23px 23px; }
.p-view { width: 40px; }
.p-view .body { padding-left: 3px; gap: 3px; }
.p-view .named { width: 20px; }
.p-meas { width: 33px; }
.p-create { width: 51px; }
.p-create .body { padding-left: 3px; }
.p-lines { width: 54px; background: #e7f0df; border: 0; }
.p-lines .body { justify-content: space-around; }
.p-lines .body button { flex-direction: column; line-height: 9px; gap: 3px; }
.context { height: 17px; padding: 3px 5px 0; background: #e0edd2; }

.work { display: grid; grid-template-columns: 156px minmax(0, 1fr); }
.side { display: flex; flex-direction: column; background: #f1f1f1; border-right: 2px solid #ddd; }
.palette { padding: 1px 2px 0 0; }
.palette h3 { display: flex; align-items: center; justify-content: space-between; height: 13px; padding: 0 1px 0 2px; }
.x { width: 9px; font-size: 8px; color: #111; }
.preview { display: flex; align-items: center; justify-content: space-between; height: 43px; padding-left: 4px; background: linear-gradient(90deg, #eee, #e4e4e4); border-top: 1px solid #ddd; }
.preview span { display: flex; justify-content: center; width: 38px; height: 38px; border: 1px solid #e5e5e5; color: #8d8d8d; font: 900 34px/32px Roboto, sans-serif; }
.typerow { position: relative; display: flex; gap: 3px; height: 15px; padding: 1px 0 1px 2px; }
.typerow select { appearance: none; flex: none; width: 101px; padding-left: 2px; border: 1px solid #aaa; background: #e8e8e8; }
.chev { position: absolute; left: 94px; top: 4px; width: 7px; height: 7px; }
.typerow button { gap: 2px; color: #999; }
.scrolled { display: flex; justify-content: space-between; }
table { width: 142px; table-layout: fixed; border-collapse: collapse; background: #fff; }
.c-name { width: 68px; }
.c-pick { width: 7px; }
tr { height: 11px; }
td, th { height: 11px; padding: 0 0 0 4px; border: 1px solid #ddd; border-width: 0 1px 1px 0; font-weight: 400; text-align: left; line-height: 10px; white-space: nowrap; }
td:nth-child(n+2) { padding: 0; }
.head th { padding-left: 2px; background: #dcdcdc; color: #222; font-weight: 500; }
.head svg { float: right; width: 9px; height: 9px; }
td input { display: block; width: 100%; height: 10px; padding-left: 1px; }
.dim { color: #777; }
td .focus { border: 1px solid #222; }
td.pick { background: #ddd; border: 1px solid #aaa; }
.vbar { display: flex; flex-direction: column; align-items: center; width: 10px; background: #f0f0f0; }
.vbar svg { width: 9px; height: 10px; }
.thumb-long, .thumb-short, .thumb { width: 9px; background: #c9c9c9; }
.thumb-long { flex: 1; margin-bottom: 26px; }
.thumb-short { height: 10px; margin-bottom: auto; }
.helprow { display: flex; align-items: center; justify-content: space-between; height: 15px; padding: 0 1px 0 2px; }
.helprow a { color: #1b6d9d; }
.helprow button { width: 45px; height: 13px; background: #ccc; color: #888; border: 1px solid #c0c0c0; }
.palette.browser { padding-top: 0; border-top: 1px solid #ddd; }
.browser h3 { height: 12px; }
.browser .scrolled { height: 71px; overflow: hidden; background: #fff; }
ul { margin: 0; padding: 0; list-style: none; }
.tree { padding-left: 3px; color: #222; }
.tree svg { width: 10px; height: 10px; margin: 0 3px 0 4px; vertical-align: -2px; }
.tree ul { margin-left: 3px; padding-left: 9px; border-left: 1px dotted #aaa; }
.tree .leaf { margin-left: 15px; padding-left: 0; }
.leaf li::before { content: ""; display: inline-block; width: 9px; margin-right: 2px; border-top: 1px dotted #aaa; vertical-align: 2px; }
.tree b { font-weight: 700; background: #ddd; }
.box { display: inline-block; width: 6px; height: 6px; margin-right: 1px; border: 1px solid #aaa; background: linear-gradient(#fff 1px, #555 1px 2px, #fff 2px) 0 1px no-repeat; }
.tree ul .box { margin-right: 7px; }

.views { display: grid; grid-template-columns: minmax(0, 1fr) 10px; grid-template-rows: 15px auto 11px; background: #f0f0f0; }
.doctabs { grid-column: 1 / 3; display: flex; align-items: center; background: #c9c9c9; }
.doctabs button { height: 15px; gap: 4px; padding-left: 2px; justify-content: flex-start; color: #555; }
.doctabs button:first-child { width: 87px; }
.doctabs .active { width: 78px; padding: 0 2px 0 3px; background: #fff; color: #111; gap: 2px; }
.active span { margin-left: auto; font-size: 8px; }
.doctabs .more { margin-left: auto; }
.canvas { position: relative; background: #fff; }
.plan { display: block; width: 100%; height: auto; }
.thin { fill: none; stroke: #444; stroke-width: .8; }
.t { fill: none; stroke: #222; }
.bold { fill: none; stroke: #111; stroke-width: 1.200; }
.label { fill: #111; font: 19px "Liberation Sans", Arial, sans-serif; }
.dn { font: 15px "Liberation Sans", Arial, sans-serif; }
.grid { font: 26px "Liberation Sans", Arial, sans-serif; }
.q { fill: #fff; font: 700 25px "Liberation Sans", Arial, sans-serif; }
.navbar { position: absolute; top: 1px; right: 1px; display: flex; flex-direction: column; align-items: center; width: 21px; height: 70px; border: 1px solid #bbb; border-radius: 4px; background: #f4f4f4d9; }
.navbar i { align-self: flex-end; width: 5px; height: 5px; margin: 1px 2px; border: 1px solid #aaa; border-radius: 50%; }
.navbar svg { width: 16px; height: 18px; }
.navbar text { fill: #477cab; font: 6px "Liberation Sans", sans-serif; }
.navbar hr { width: 15px; margin: 1px 0; border: 0; border-top: 1px solid #ccc; }
.navbar .caret { height: 6px; opacity: .6; }
.tall .thumb { height: 10px; margin-top: 114px; margin-bottom: auto; }
.viewbar { grid-column: 1 / 3; display: flex; align-items: center; padding: 0 13px 0 15px; }
.viewbar > span { width: 31px; }
.vicons { display: grid; grid-template-columns: repeat(12, 1fr); width: 153px; }
.vicons svg { width: 11px; height: 11px; }
.hthumb { width: 10px; height: 9px; margin: 0 auto 0 108px; background: #ccc; }
.viewbar > svg { width: 9px; height: 9px; }

.status { display: flex; align-items: center; height: 17px; padding: 0 3px 0 2px; background: #d0d0d0; }
.status > strong { width: 78px; color: #222; font-weight: 500; white-space: nowrap; }
.status .pick { position: relative; width: 124px; margin-left: 3px; }
.pick select { display: block; appearance: none; width: 100%; height: 11px; padding-left: 2px; background: #fff; color: #888; }
.pick svg { position: absolute; right: 1px; top: 2px; width: 8px; height: 8px; opacity: .6; }
.counts { display: flex; width: 37px; padding-left: 4px; }
.status > svg + svg { margin-left: 3px; }
.seltools { display: flex; gap: 4px; margin-left: auto; }

.controls { display: flex; align-items: center; height: 20px; padding: 1px 0 0 11px; color: #777; }
.site { width: 115px; font: 10px/12px "Liberation Mono", monospace; }
time { font: 7px/10px "Liberation Sans", sans-serif; }
.controls input { appearance: none; flex: 1; height: 14px; margin: 0 6px; }
.controls input::-webkit-slider-runnable-track { height: 5px; border: 1px solid #999; border-radius: 3px; background: linear-gradient(90deg, #62a1c8 33%, #c6c6c6 33%); }
.controls input::-webkit-slider-thumb { appearance: none; width: 14px; height: 14px; margin-top: -6px; border: 1px solid #999; border-radius: 50%; background: conic-gradient(#fff, #bbb, #fff, #bbb, #fff); }
.transport { display: flex; margin-left: 9px; }
.transport button { width: 35px; height: 18px; border-left: 1px solid #aaa; box-shadow: inset 1px 0 #ddd; }
```
